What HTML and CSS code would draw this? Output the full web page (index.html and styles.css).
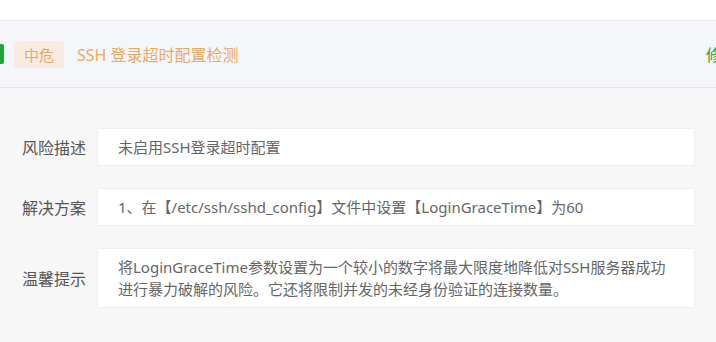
FILE: index.html
```html
<!DOCTYPE html>
<html>
<head>
    <meta charset="utf-8">
    <title>SSH 登录超时配置检测</title>
    <link rel="stylesheet" href="styles.css">
</head>
<body>
    <div class="top-space"></div>

    <!-- Risk item header -->
    <div class="risk-header">
        <span class="status-mark"></span>
        <span class="level-tag">中危</span>
        <span class="risk-title">SSH 登录超时配置检测</span>
        <a class="fix-link" href="#">修复</a>
    </div>

    <!-- Risk details -->
    <div class="risk-detail">
        <div class="detail-row">
            <span class="detail-label">风险描述</span>
            <div class="detail-box">未启用SSH登录超时配置</div>
        </div>
        <div class="detail-row">
            <span class="detail-label">解决方案</span>
            <div class="detail-box">1、在【/etc/ssh/sshd_config】文件中设置【LoginGraceTime】为60</div>
        </div>
        <div class="detail-row">
            <span class="detail-label">温馨提示</span>
            <div class="detail-box">将LoginGraceTime参数设置为一个较小的数字将最大限度地降低对SSH服务器成功进行暴力破解的风险。它还将限制并发的未经身份验证的连接数量。</div>
        </div>
    </div>
</body>
</html>
```

FILE: styles.css
```css
html {
    overflow: hidden;
}

body {
    font-family: "Noto Sans", "Noto Sans CJK SC", sans-serif;
    margin: 0;
    background-color: #f7f7f7;
    min-height: 100vh;
}

.top-space {
    height: 20px;
    background-color: #fff;
}

.risk-header {
    display: flex;
    align-items: center;
    height: 66px;
    background-color: #f5f6fa;
    border-top: 1px solid #e8e9ee;
    border-bottom: 1px solid #e6e6e6;
}

.status-mark {
    width: 4px;
    height: 20px;
    background-color: #20a53a;
    border-radius: 0 2px 2px 0;
    margin-right: 10px;
}

.level-tag {
    display: inline-flex;
    align-items: center;
    justify-content: center;
    width: 50px;
    height: 27px;
    background-color: #f8ece2;
    color: #eba865;
    font-size: 15px;
    border-radius: 3px;
    margin-right: 13px;
}

.risk-title {
    color: #eba865;
    font-size: 16px;
}

.fix-link {
    margin-left: auto;
    margin-right: -22px;
    color: #20a53a;
    font-size: 16px;
    text-decoration: none;
}

.risk-detail {
    padding: 40px 21px 20px 22px;
}

.detail-row {
    display: flex;
    align-items: center;
    margin-bottom: 22px;
}

.detail-label {
    width: 75px;
    flex-shrink: 0;
    color: #555;
    font-size: 16px;
}

.detail-box {
    flex: 1;
    padding: 7px 16px 7px 20px;
    background-color: #fff;
    border: 1px solid #efefef;
    border-radius: 2px;
    color: #666;
    font-size: 15px;
    line-height: 22px;
}
```
